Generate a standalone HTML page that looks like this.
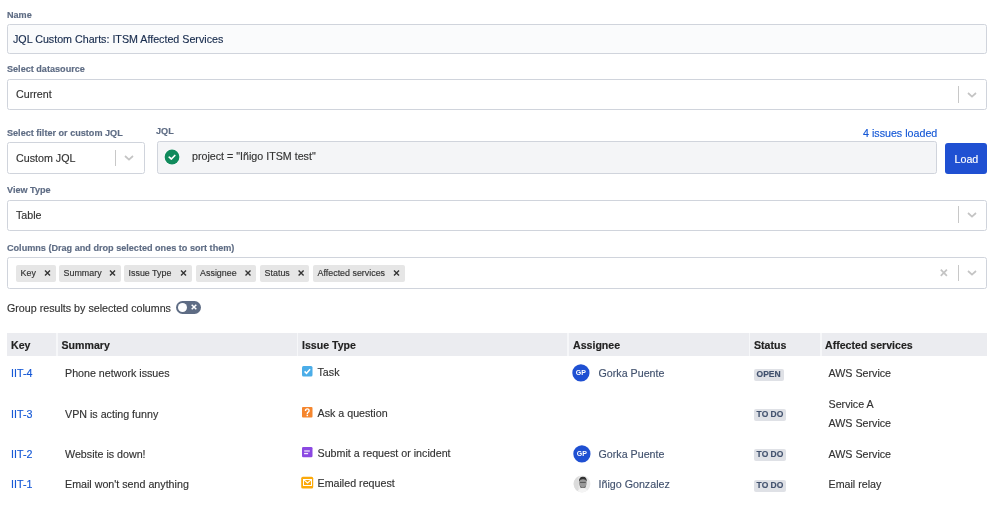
<!DOCTYPE html>
<html><head><meta charset="utf-8">
<style>
html,body{margin:0;padding:0;background:#fff;width:999px;height:512px;overflow:hidden;position:relative;font-family:"Liberation Sans",sans-serif}
.a{position:absolute;white-space:nowrap;line-height:20px}
.lbl{font-weight:bold;font-size:9.1px;color:#5E6C84}
.t{font-size:10.7px;color:#333}
.box{position:absolute;box-sizing:border-box;border:1px solid #D0D4DC;border-radius:2.5px;background:#fff}
.sep{position:absolute;width:1px;background:#C8C8C8}
.tag{position:absolute;top:265px;height:17px;background:#E6E6E6;border-radius:2px}
.tg{position:absolute;font-size:8.9px;color:#333;line-height:20px;top:-2px;left:4.6px;white-space:nowrap}
.th{position:absolute;top:333px;height:23px;background:#EBECF0}
.hd{font-weight:bold;font-size:10.6px;color:#222}
.lk{color:#1558D6}
.nm{color:#42526E}
.loz{position:absolute;height:12px;background:#DFE1E6;border-radius:2px}
.lz{position:absolute;font-weight:bold;font-size:8.5px;color:#42526E;line-height:20px;top:-5px;left:2.6px;white-space:nowrap}
body *{-webkit-text-stroke:0.15px currentColor}
body{filter:blur(0.25px)}
</style></head><body>

<div class="a lbl" style="left:7px;top:5px">Name</div>
<div class="box" style="left:7px;top:24px;width:980px;height:30px;background:#FAFBFC"></div>
<div class="a t" style="left:13px;top:29px;color:#172B4D">JQL Custom Charts: ITSM Affected Services</div>

<div class="a lbl" style="left:7px;top:59px">Select datasource</div>
<div class="box" style="left:7px;top:79px;width:980px;height:31px"></div>
<div class="a t" style="left:16px;top:84px">Current</div>
<div class="sep" style="left:957.5px;top:86px;height:17px"></div>
<svg class="a" style="left:966px;top:90px" width="12" height="10" viewBox="0 0 12 10"><path d="M2 3 L6 6.6 L10 3" fill="none" stroke="#C4C4C4" stroke-width="1.7"/></svg>

<div class="a lbl" style="left:7px;top:123px">Select filter or custom JQL</div>
<div class="box" style="left:7px;top:142px;width:138px;height:32px"></div>
<div class="a t" style="left:16px;top:148px">Custom JQL</div>
<div class="sep" style="left:115px;top:149.5px;height:16.5px"></div>
<svg class="a" style="left:123px;top:153px" width="12" height="10" viewBox="0 0 12 10"><path d="M2 3 L6 6.6 L10 3" fill="none" stroke="#C4C4C4" stroke-width="1.7"/></svg>

<div class="a lbl" style="left:156px;top:121px">JQL</div>
<div class="a t lk" style="left:863px;top:123px">4 issues loaded</div>
<div class="box" style="left:157px;top:141px;width:780px;height:33px;background:#F4F5F7"></div>
<svg class="a" style="left:163px;top:148.3px" width="18" height="18" viewBox="0 0 18 18"><circle cx="9" cy="9" r="8" fill="#fff"/><circle cx="9" cy="9" r="7.4" fill="#108A5C"/><path d="M6.2 9.2 L8.4 11 L11.8 7.5" fill="none" stroke="#fff" stroke-width="1.7" stroke-linecap="round" stroke-linejoin="round"/></svg>
<div class="a t" style="left:192px;top:146px">project = "Iñigo ITSM test"</div>
<div style="position:absolute;left:945px;top:143px;width:42px;height:31px;background:#1F50D2;border-radius:3px"></div>
<div class="a t" style="left:954.5px;top:149px;color:#fff">Load</div>

<div class="a lbl" style="left:7px;top:180px">View Type</div>
<div class="box" style="left:7px;top:200px;width:980px;height:31px"></div>
<div class="a t" style="left:16px;top:205px">Table</div>
<div class="sep" style="left:957.5px;top:206px;height:17px"></div>
<svg class="a" style="left:966px;top:210px" width="12" height="10" viewBox="0 0 12 10"><path d="M2 3 L6 6.6 L10 3" fill="none" stroke="#C4C4C4" stroke-width="1.7"/></svg>

<div class="a lbl" style="left:7px;top:238px">Columns (Drag and drop selected ones to sort them)</div>
<div class="box" style="left:7px;top:257px;width:980px;height:32px"></div>
<div class="tag" style="left:16px;width:40px"><span class="tg">Key</span></div>
<div class="tag" style="left:59px;width:62px"><span class="tg">Summary</span></div>
<div class="tag" style="left:124px;width:68px"><span class="tg">Issue Type</span></div>
<div class="tag" style="left:195.5px;width:60.5px"><span class="tg">Assignee</span></div>
<div class="tag" style="left:260px;width:49px"><span class="tg">Status</span></div>
<div class="tag" style="left:313px;width:92px"><span class="tg">Affected services</span></div>
<svg class="a" style="left:0;top:0" width="999" height="300">
<g stroke="#333" stroke-width="1.4" fill="none">
<path d="M45 270.5 L50 275.5 M50 270.5 L45 275.5"/>
<path d="M110 270.5 L115 275.5 M115 270.5 L110 275.5"/>
<path d="M181 270.5 L186 275.5 M186 270.5 L181 275.5"/>
<path d="M245.5 270.5 L250.5 275.5 M250.5 270.5 L245.5 275.5"/>
<path d="M298.6 270.5 L303.6 275.5 M303.6 270.5 L298.6 275.5"/>
<path d="M394 270.5 L399 275.5 M399 270.5 L394 275.5"/>
</g>
<path d="M940.8 269.6 L946.9 275.9 M946.9 269.6 L940.8 275.9" stroke="#C4C4C4" stroke-width="1.7" fill="none"/>
</svg>
<div class="sep" style="left:957.5px;top:264.5px;height:16.5px"></div>
<svg class="a" style="left:966px;top:268px" width="12" height="10" viewBox="0 0 12 10"><path d="M2 3 L6 6.6 L10 3" fill="none" stroke="#C4C4C4" stroke-width="1.7"/></svg>

<div class="a t" style="left:7px;top:298px">Group results by selected columns</div>
<div style="position:absolute;left:176px;top:301px;width:25px;height:12.5px;border-radius:6.5px;background:#5E6C84"></div>
<div style="position:absolute;left:177.6px;top:302.9px;width:9.3px;height:9.3px;border-radius:50%;background:#fff"></div>
<svg class="a" style="left:190px;top:303px" width="8" height="8" viewBox="0 0 8 8"><path d="M1.7 1.7 L6.3 6.3 M6.3 1.7 L1.7 6.3" stroke="#fff" stroke-width="1.5"/></svg>

<div class="th" style="left:7px;width:980px;background:#F6F7F9"></div>
<div class="th" style="left:7px;width:49px"></div>
<div class="th" style="left:58px;width:239px"></div>
<div class="th" style="left:298px;width:269px"></div>
<div class="th" style="left:569px;width:180px"></div>
<div class="th" style="left:750px;width:70px"></div>
<div class="th" style="left:821.5px;width:165.5px"></div>
<div class="a hd" style="left:11px;top:335px">Key</div>
<div class="a hd" style="left:61.5px;top:335px">Summary</div>
<div class="a hd" style="left:302px;top:335px">Issue Type</div>
<div class="a hd" style="left:573px;top:335px">Assignee</div>
<div class="a hd" style="left:754px;top:335px">Status</div>
<div class="a hd" style="left:825px;top:335px">Affected services</div>

<!-- row 1 -->
<div class="a t lk" style="left:11px;top:363px">IIT-4</div>
<div class="a t" style="left:65px;top:363px">Phone network issues</div>
<svg class="a" style="left:302px;top:366px" width="11" height="11" viewBox="0 0 11 11"><rect x="0" y="0" width="10.5" height="10.5" rx="1.5" fill="#4BADE8"/><path d="M2.6 5.4 L4.5 7.3 L8.1 3.3" fill="none" stroke="#fff" stroke-width="1.5"/></svg>
<div class="a t" style="left:317.5px;top:362px">Task</div>
<svg class="a" style="left:572.3px;top:364.2px" width="18" height="18" viewBox="0 0 18 18"><circle cx="8.9" cy="8.9" r="8.6" fill="#1F50D2"/><text x="8.9" y="11.2" font-family="Liberation Sans" font-weight="bold" font-size="7" fill="#fff" text-anchor="middle">GP</text></svg>
<div class="a t nm" style="left:598.5px;top:363px">Gorka Puente</div>
<div class="loz" style="left:754px;top:369px;width:30px"><span class="lz">OPEN</span></div>
<div class="a t" style="left:828.5px;top:363px">AWS Service</div>

<!-- row 2 -->
<div class="a t lk" style="left:11px;top:404px">IIT-3</div>
<div class="a t" style="left:65px;top:404px">VPN is acting funny</div>
<svg class="a" style="left:302px;top:407.4px" width="11" height="11" viewBox="0 0 11 11"><rect x="0" y="0" width="10.5" height="10.5" rx="1" fill="#F5862E"/><path d="M3.5 4 Q3.5 1.9 5.3 1.9 Q7.1 1.9 7.1 3.7 Q7.1 4.8 6 5.4 Q5.3 5.8 5.3 6.9" fill="none" stroke="#fff" stroke-width="1.4"/><rect x="4.55" y="7.7" width="1.5" height="1.5" fill="#fff"/></svg>
<div class="a t" style="left:317.5px;top:403px">Ask a question</div>
<div class="loz" style="left:754px;top:409px;width:32px"><span class="lz">TO DO</span></div>
<div class="a t" style="left:828.5px;top:394px">Service A</div>
<div class="a t" style="left:828.5px;top:413px">AWS Service</div>

<!-- row 3 -->
<div class="a t lk" style="left:11px;top:444px">IIT-2</div>
<div class="a t" style="left:65px;top:444px">Website is down!</div>
<svg class="a" style="left:302px;top:446.7px" width="11" height="11" viewBox="0 0 11 11"><rect x="0" y="0" width="10.5" height="10.3" rx="1.3" fill="#8B48E2"/><rect x="2.2" y="3" width="5.6" height="2.2" fill="#fff" fill-opacity="0.55"/><rect x="2.1" y="6.1" width="4" height="1.1" fill="#fff"/></svg>
<div class="a t" style="left:317.5px;top:443px">Submit a request or incident</div>
<svg class="a" style="left:572.5px;top:444.5px" width="18" height="18" viewBox="0 0 18 18"><circle cx="8.9" cy="8.9" r="8.6" fill="#1F50D2"/><text x="8.9" y="11.2" font-family="Liberation Sans" font-weight="bold" font-size="7" fill="#fff" text-anchor="middle">GP</text></svg>
<div class="a t nm" style="left:598.5px;top:444px">Gorka Puente</div>
<div class="loz" style="left:754px;top:449px;width:32px"><span class="lz">TO DO</span></div>
<div class="a t" style="left:828.5px;top:444px">AWS Service</div>

<!-- row 4 -->
<div class="a t lk" style="left:11px;top:474px">IIT-1</div>
<div class="a t" style="left:65px;top:474px">Email won't send anything</div>
<svg class="a" style="left:301px;top:476px" width="14" height="14" viewBox="0 0 14 14"><rect x="0.2" y="0.7" width="12" height="11.9" rx="1.6" fill="#FBA90A"/><rect x="2.5" y="3.5" width="8" height="6" fill="none" stroke="#fff" stroke-width="1"/><path d="M2.6 3.6 L6.5 7 L10.4 3.6" fill="none" stroke="#fff" stroke-width="1.05"/></svg>
<div class="a t" style="left:317.5px;top:473px">Emailed request</div>
<svg class="a" style="left:572.5px;top:475px" width="18" height="18" viewBox="0 0 18 18"><defs><clipPath id="cp"><circle cx="9" cy="9" r="8.4"/></clipPath></defs><circle cx="9" cy="9" r="8.4" fill="#E9E9E9"/><g clip-path="url(#cp)"><rect x="0" y="0" width="5.5" height="18" fill="#DCDCDC"/><ellipse cx="9.8" cy="8" rx="3.9" ry="5" fill="#9A9A9A"/><path d="M5.9 6.5 Q6 1.6 10 1.8 Q14 1.9 13.8 6.5 Q12.5 4.2 10 4.3 Q7.3 4.2 5.9 6.5Z" fill="#333"/><rect x="7" y="6.9" width="5.8" height="1" fill="#555"/><path d="M7 10.5 Q9.8 14.5 12.8 10.5 L12.6 12.4 Q9.8 14 7.2 12.4Z" fill="#666"/><path d="M3.5 18 Q5.5 13.5 9.8 13 Q14 13.5 16 18Z" fill="#F4F4F4"/></g></svg>
<div class="a t nm" style="left:598.5px;top:474px">Iñigo Gonzalez</div>
<div class="loz" style="left:754px;top:480px;width:32px"><span class="lz">TO DO</span></div>
<div class="a t" style="left:828.5px;top:474px">Email relay</div>

</body></html>
